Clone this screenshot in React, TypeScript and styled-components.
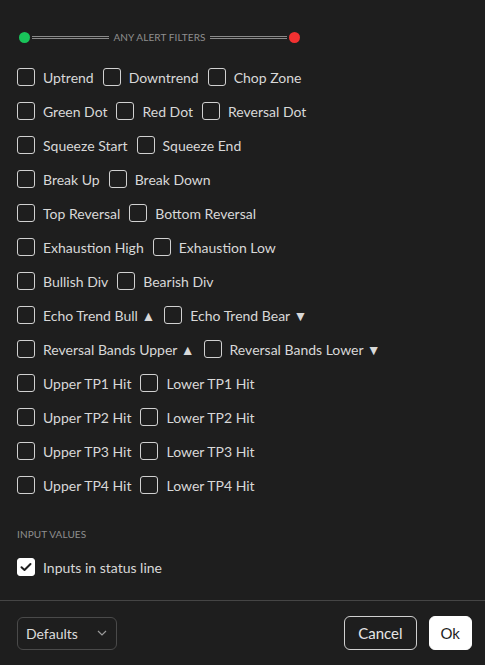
import React from "react";
import styled, { createGlobalStyle } from "styled-components";

const GlobalStyle = createGlobalStyle`
  html, body {
    margin: 0;
    padding: 0;
    background: #1e1e1e;
  }
  body {
    font-family: "Lato", "Open Sans", sans-serif;
    color: #d8d8d8;
  }
`;

const Dialog = styled.div`
  width: 485px;
  height: 665px;
  background: #1e1e1e;
  display: flex;
  flex-direction: column;
  box-sizing: border-box;
`;

const Body = styled.div`
  padding: 30px 17px 0 17px;
  display: flex;
  flex-direction: column;
`;

const TitleRow = styled.div`
  display: flex;
  align-items: center;
  width: 281px;
  margin-left: 2px;
  height: 14px;
`;

const Dot = styled.span<{ $color: string }>`
  width: 11px;
  height: 11px;
  border-radius: 50%;
  background: ${(p) => p.$color};
  flex: none;
`;

const DoubleLine = styled.span`
  flex: 1;
  height: 1px;
  border-top: 1px solid #8a8a8a;
  border-bottom: 1px solid #8a8a8a;
  margin: 0 2px;
`;

const TitleText = styled.span`
  font-size: 10px;
  color: #8f8f8f;
  letter-spacing: 0.1px;
  padding: 0 2px;
  white-space: nowrap;
`;

const Rows = styled.div`
  margin-top: 24px;
  display: flex;
  flex-direction: column;
  gap: 16px;
`;

const Row = styled.div`
  display: flex;
  align-items: center;
  gap: 9px;
  height: 18px;
`;

const Item = styled.label`
  display: flex;
  align-items: center;
  gap: 8px;
  font-size: 14px;
  white-space: nowrap;
  color: #d8d8d8;
`;

const Box = styled.span<{ $checked?: boolean }>`
  width: 18px;
  height: 18px;
  box-sizing: border-box;
  border-radius: 3px;
  border: 1px solid ${(p) => (p.$checked ? "#ffffff" : "#d1d1d1")};
  background: ${(p) => (p.$checked ? "#ffffff" : "transparent")};
  display: flex;
  align-items: center;
  justify-content: center;
  flex: none;
`;

const Section = styled.div`
  margin-top: 34px;
  font-size: 10px;
  color: #8f8f8f;
  letter-spacing: 0.1px;
`;

const StatusRow = styled(Row)`
  margin-top: 18px;
`;

const Separator = styled.div`
  height: 1px;
  background: #454545;
  margin-top: 24px;
`;

const Footer = styled.div`
  flex: 1;
  padding: 0 13px 0 17px;
  display: flex;
  align-items: center;
  justify-content: space-between;
  box-sizing: border-box;
`;

const Select = styled.div`
  width: 100px;
  height: 33px;
  box-sizing: border-box;
  border: 1px solid #4a4a4a;
  border-radius: 6px;
  display: flex;
  align-items: center;
  justify-content: space-between;
  padding: 0 8px 0 8px;
  font-size: 14px;
  color: #dcdcdc;
`;

const Buttons = styled.div`
  display: flex;
  gap: 12px;
`;

const Button = styled.button<{ $primary?: boolean }>`
  height: 34px;
  box-sizing: border-box;
  border-radius: 6px;
  font-family: "Lato", "Open Sans", sans-serif;
  font-size: 15px;
  padding: 0 ${(p) => (p.$primary ? 11 : 13)}px;
  cursor: pointer;
  border: 1px solid ${(p) => (p.$primary ? "#ffffff" : "#d0d0d0")};
  background: ${(p) => (p.$primary ? "#ffffff" : "transparent")};
  color: ${(p) => (p.$primary ? "#1e1e1e" : "#e6e6e6")};
`;

const rows: string[][] = [
  ["Uptrend", "Downtrend", "Chop Zone"],
  ["Green Dot", "Red Dot", "Reversal Dot"],
  ["Squeeze Start", "Squeeze End"],
  ["Break Up", "Break Down"],
  ["Top Reversal", "Bottom Reversal"],
  ["Exhaustion High", "Exhaustion Low"],
  ["Bullish Div", "Bearish Div"],
  ["Echo Trend Bull ▲", "Echo Trend Bear ▼"],
  ["Reversal Bands Upper ▲", "Reversal Bands Lower ▼"],
  ["Upper TP1 Hit", "Lower TP1 Hit"],
  ["Upper TP2 Hit", "Lower TP2 Hit"],
  ["Upper TP3 Hit", "Lower TP3 Hit"],
  ["Upper TP4 Hit", "Lower TP4 Hit"],
];

const Check = () => (
  <svg width="12" height="10" viewBox="0 0 12 10">
    <path d="M1.5 5.2 L4.5 8 L10.5 2" fill="none" stroke="#1e1e1e" strokeWidth="2" strokeLinecap="round" strokeLinejoin="round" />
  </svg>
);

const Chevron = () => (
  <svg width="12" height="8" viewBox="0 0 12 8">
    <path d="M2 2 L6 6 L10 2" fill="none" stroke="#9a9a9a" strokeWidth="1.2" />
  </svg>
);

export default function App() {
  return (
    <>
      <GlobalStyle />
      <Dialog>
        <Body>
          <TitleRow>
            <Dot $color="#19c45a" />
            <DoubleLine />
            <TitleText>ANY ALERT FILTERS</TitleText>
            <DoubleLine />
            <Dot $color="#f23131" />
          </TitleRow>
          <Rows>
            {rows.map((r, i) => (
              <Row key={i}>
                {r.map((label) => (
                  <Item key={label}>
                    <Box />
                    {label}
                  </Item>
                ))}
              </Row>
            ))}
          </Rows>
          <Section>INPUT VALUES</Section>
          <StatusRow>
            <Item>
              <Box $checked>
                <Check />
              </Box>
              Inputs in status line
            </Item>
          </StatusRow>
        </Body>
        <Separator />
        <Footer>
          <Select>
            Defaults
            <Chevron />
          </Select>
          <Buttons>
            <Button>Cancel</Button>
            <Button $primary>Ok</Button>
          </Buttons>
        </Footer>
      </Dialog>
    </>
  );
}
